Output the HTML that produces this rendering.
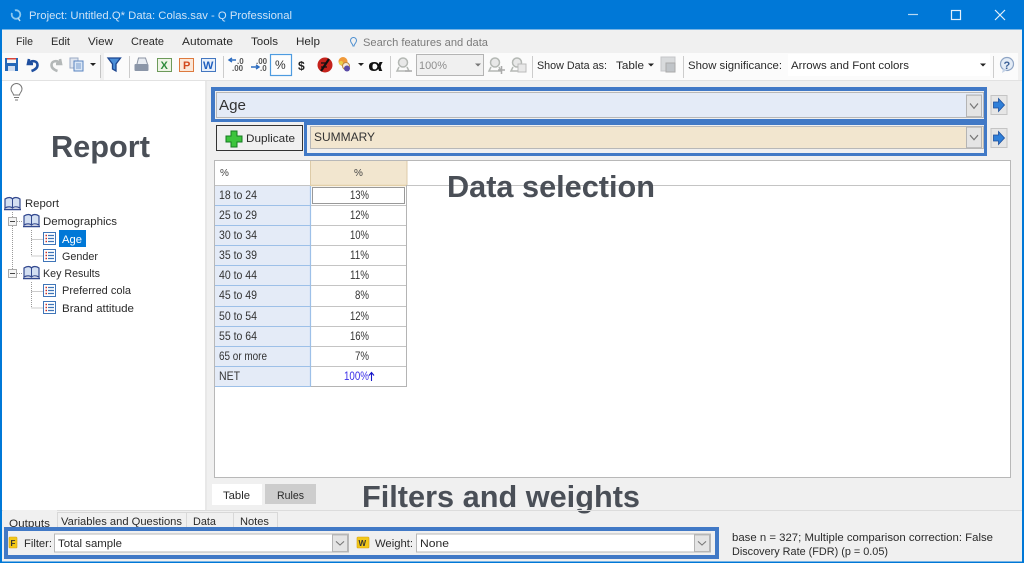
<!DOCTYPE html>
<html><head><meta charset="utf-8"><title>Q Professional</title>
<style>
html,body{margin:0;padding:0;background:#f0f0f0;width:1024px;height:563px;overflow:hidden}
svg{display:block;font-family:"Liberation Sans",sans-serif}
text{font-size:11px;fill:#2a2a2a}
.h{font-size:30.5px;font-weight:bold;fill:#4a4f57}
.v{font-size:12px;fill:#333}
.l{font-size:11.5px;fill:#333}
</style></head><body>
<svg width="1024" height="563" viewBox="0 0 1024 563" xmlns="http://www.w3.org/2000/svg">
<defs>
<g id="arrowbtn"><rect x="0.5" y="0.5" width="16" height="19" fill="#e6e6e6" stroke="#c4c4c4"/><path d="M3 7h5V3.500l6 6.500-6 6.500V13H3z" fill="#2f7fd8" stroke="#1c4f9c" stroke-width=".8"/></g>
<g id="dd"><rect x="0.5" y="0.5" width="15" height="18" fill="#e4e4e4" stroke="#b4b4b4"/><path d="M4 7.500l4 4 4-4" fill="none" stroke="#777" stroke-width="1.100"/></g>
<g id="book"><path d="M1 3c3-2 6-2 7.500 0 1.500-2 5-2 7.500 0v9c-3-1.500-6-1.500-7.500 0-1.500-1.500-5-1.500-7.500 0z" fill="#d3dff2" stroke="#33498f" stroke-width="1.200"/><path d="M8.500 3v9" stroke="#33498f"/><path d="M0 13.500h17" stroke="#33498f" stroke-width="1.400"/></g>
<g id="doc"><rect x="0.500" y="0.500" width="12" height="12" fill="#fff" stroke="#3f75b8"/><path d="M2.500 3.500h1.500M2.500 6.500h1.500M2.500 9.500h1.500" stroke="#c8322a" stroke-width="1.400"/><path d="M5 3.500h6M5 6.500h6M5 9.500h6" stroke="#3f75b8" stroke-width="1.200"/></g>
<g id="minus"><rect x="0.500" y="0.500" width="8" height="8" fill="#f4f4f4" stroke="#aaa"/><path d="M2 4.500h5" stroke="#444"/></g>
<g id="mag"><circle cx="7" cy="5.500" r="4.500" fill="#e8e8e8" stroke="#b4b8b4" stroke-width="1.500"/><path d="M3 10l-2 4h12l-2-4" fill="none" stroke="#b4b8b4" stroke-width="1.500"/></g>
</defs>

<rect width="1024" height="563" fill="#0078d7"/>
<rect x="2" y="29.500" width="1020" height="532" fill="#f0f0f0"/>

<circle cx="16" cy="14.500" r="4.300" fill="none" stroke="#8cc8ee" stroke-width="1.800" stroke-dasharray="15 4"/>
<path d="M18 18l2 3" stroke="#bfe0f5" stroke-width="1.500"/>
<text x="29" y="19" style="fill:#cfe3f6" textLength="263" lengthAdjust="spacingAndGlyphs">Project: Untitled.Q*  Data: Colas.sav - Q Professional</text>
<path d="M908 14.500h10" stroke="#b8d8f2" stroke-width="1.200"/>
<rect x="951.500" y="10.500" width="9" height="9" fill="none" stroke="#e4f0fa" stroke-width="1.200"/>
<path d="M995 10l10 10M1005 10l-10 10" stroke="#e4f0fa" stroke-width="1.200"/>

<text x="16" y="45" textLength="17" lengthAdjust="spacingAndGlyphs">File</text>
<text x="51" y="45" textLength="19" lengthAdjust="spacingAndGlyphs">Edit</text>
<text x="88" y="45" textLength="25" lengthAdjust="spacingAndGlyphs">View</text>
<text x="131" y="45" textLength="33" lengthAdjust="spacingAndGlyphs">Create</text>
<text x="182" y="45" textLength="51" lengthAdjust="spacingAndGlyphs">Automate</text>
<text x="251" y="45" textLength="27" lengthAdjust="spacingAndGlyphs">Tools</text>
<text x="296" y="45" textLength="24" lengthAdjust="spacingAndGlyphs">Help</text>
<path d="M353 46c0-2-2.500-3-2.500-5.500a3 3 0 0 1 6 0c0 2.500-2.500 3.500-2.500 5.500z" fill="none" stroke="#4d8fd0" stroke-width="1"/>
<text x="363" y="46" style="fill:#7b7b7b" textLength="125" lengthAdjust="spacingAndGlyphs">Search features and data</text>

<rect x="2" y="53" width="98" height="27" fill="#fafafa"/>
<rect x="104" y="53" width="914" height="27" fill="#fbfbfb"/>
<rect x="2" y="80" width="1020" height="1" fill="#e2e2e2"/>
<rect x="5" y="58" width="13" height="13" fill="#2467b8"/><rect x="7" y="58" width="9" height="5" fill="#f4f4f4"/><rect x="7" y="58" width="9" height="1.500" fill="#d8443a"/><rect x="8" y="66" width="7" height="5" fill="#cfdcef"/>
<path d="M29 59l-1 5 5 0M28.500 63.500c3-3.500 9-3 9 1.500 0 3-3 5-6 6" fill="none" stroke="#1f4f9f" stroke-width="2.600"/>
<path d="M60 59l1 5-5 0M60.500 63.500c-3-3.500-9-3-9 1.500 0 3 3 5 6 6" fill="none" stroke="#b4b8b8" stroke-width="2.600"/>
<rect x="70" y="58" width="8" height="10" fill="#e0e6f0" stroke="#9aaac4"/><rect x="74" y="61" width="9" height="10" fill="#dbe7f6" stroke="#5a84c0"/><path d="M76 64h5M76 66h5M76 68h5" stroke="#5a84c0" stroke-width=".8"/>
<path d="M90 63h6l-3 3z" fill="#222"/>
<path d="M100.500 55v23" stroke="#c4c4c4"/>
<path d="M108 58h12.500l-4.500 6v7l-3.500-2v-5z" fill="#4a8ed8" stroke="#1d4690" stroke-width="1.300"/>
<path d="M129.500 56v22" stroke="#ccc"/>
<path d="M137 64l1.500-6h7l2 6" fill="#e8ecf2" stroke="#8b93a3"/><rect x="134.500" y="64" width="14" height="7" rx="1" fill="#8b96a8"/>
<rect x="157.500" y="58.500" width="14" height="13" fill="#eef4e6" stroke="#6d9a5a"/><text x="160.500" y="69" style="font-size:11px;font-weight:bold;fill:#2d8a3a">X</text>
<rect x="179.500" y="58.500" width="14" height="13" fill="#fbe7d8" stroke="#dd7a3e"/><text x="183" y="69" style="font-size:11px;font-weight:bold;fill:#d2481c">P</text>
<rect x="201.500" y="58.500" width="14" height="13" fill="#e7effa" stroke="#4477c0"/><text x="203" y="69" style="font-size:11px;font-weight:bold;fill:#1f5fbf">W</text>
<path d="M223.500 56v22" stroke="#ccc"/>
<path d="M236 60h-6M232 58l-3 2 3 2" fill="none" stroke="#2c6cc0" stroke-width="1.400"/><text x="237" y="64" style="font-size:8px;font-weight:bold;fill:#555">.0</text><text x="232" y="71" style="font-size:8px;font-weight:bold;fill:#555">.00</text>
<path d="M251 67h7M256 65l3 2-3 2" fill="none" stroke="#2c6cc0" stroke-width="1.400"/><text x="256" y="64" style="font-size:8px;font-weight:bold;fill:#555">.00</text><text x="260" y="71" style="font-size:8px;font-weight:bold;fill:#555">.0</text>
<rect x="270.500" y="54.500" width="21" height="21" fill="#fdfdfd" stroke="#4d9be0" stroke-width="1.200"/>
<text x="275" y="69" style="font-size:12px;fill:#333">%</text>
<text x="298" y="70" style="font-size:12px;font-weight:bold;fill:#222">$</text>
<circle cx="325" cy="65" r="7.500" fill="#c5221c"/><path d="M329 59l-8 12" stroke="#111" stroke-width="2.200"/><path d="M321 63h6M321 67h6" stroke="#111" stroke-width="1.300"/>
<circle cx="343" cy="61.500" r="4.500" fill="#f09a3a"/><circle cx="341" cy="63" r="2" fill="#e9d04a"/><circle cx="346" cy="66" r="3.500" fill="#f4ead8" stroke="#bb8844"/><circle cx="347" cy="68.500" r="3" fill="#5a4ba8"/>
<path d="M358 63h6l-3 3z" fill="#222"/>
<text x="368" y="71" style="font-size:17px;fill:#111;font-weight:bold" textLength="15" lengthAdjust="spacingAndGlyphs">α</text>
<path d="M390.500 56v22" stroke="#ccc"/>
<use href="#mag" x="396" y="57"/><path d="M405 71h7" stroke="#aaa" stroke-width="1.500"/>
<rect x="416.500" y="54.500" width="67" height="21" fill="#f0f0f0" stroke="#b4b4b4"/>
<text x="419" y="69" style="fill:#8e8e8e" textLength="28" lengthAdjust="spacingAndGlyphs">100%</text>
<path d="M475 63.500h6l-3 3z" fill="#777"/>
<use href="#mag" x="488" y="57"/><path d="M498 70h7M501.500 66v8" stroke="#aaa" stroke-width="1.500"/>
<use href="#mag" x="510" y="57"/><rect x="518" y="64" width="8" height="8" fill="#e8e8e8" stroke="#bbb"/>
<path d="M532.500 56v22" stroke="#ccc"/>
<text x="537" y="69" textLength="70" lengthAdjust="spacingAndGlyphs">Show Data as:</text>
<text x="616" y="69" textLength="28" lengthAdjust="spacingAndGlyphs">Table</text>
<path d="M648 63.500h6l-3 3z" fill="#222"/>
<rect x="661" y="57" width="14" height="14" fill="#d8dadc" stroke="#c4c6c8"/><rect x="666" y="63" width="9" height="9" fill="#c0c4c8" stroke="#aaa"/>
<path d="M683.500 56v22" stroke="#ccc"/>
<text x="688" y="69" textLength="94" lengthAdjust="spacingAndGlyphs">Show significance:</text>
<rect x="788" y="54" width="202" height="22" fill="#fff"/>
<text x="791" y="69" textLength="118" lengthAdjust="spacingAndGlyphs">Arrows and Font colors</text>
<path d="M980 63.500h6l-3 3z" fill="#222"/>
<path d="M993.500 56v22" stroke="#ccc"/>
<circle cx="1007" cy="64" r="6.500" fill="#e4ecf6" stroke="#8ea4c4" stroke-width="1.200"/><text x="1003.500" y="69" style="font-size:11px;font-weight:bold;fill:#3b5f96">?</text>
<path d="M1003 69l-1 4 5-3" fill="#c4d2e6"/>

<rect x="2" y="81" width="203" height="430" fill="#fff"/>
<path d="M13.500 95c0-2-2.500-3-2.500-6a5.500 5.500 0 0 1 11 0c0 3-2.500 4-2.500 6zM14 97.500h5M15 100h3" fill="none" stroke="#777" stroke-width="1"/>
<text class="h" x="51" y="157" textLength="99" lengthAdjust="spacingAndGlyphs">Report</text>

<g stroke="#9a9a9a" stroke-dasharray="1 1" fill="none">
<path d="M12.500 212v64M17 221.500h6M17 273.500h6M31.500 230v26h12M31.500 239.500h12M31.500 282v26h12M31.500 291.500h12"/>
</g>
<use href="#book" x="4" y="196"/>
<use href="#minus" x="8" y="217"/><use href="#book" x="23" y="213"/>
<use href="#minus" x="8" y="269"/><use href="#book" x="23" y="265"/>
<use href="#doc" x="43" y="232"/><use href="#doc" x="43" y="249"/><use href="#doc" x="43" y="284"/><use href="#doc" x="43" y="301"/>
<text x="25" y="207" textLength="34" lengthAdjust="spacingAndGlyphs">Report</text>
<text x="43" y="225" textLength="74" lengthAdjust="spacingAndGlyphs">Demographics</text>
<rect x="59" y="230" width="27" height="17" fill="#0078d7"/>
<text x="62" y="243" style="fill:#fff" textLength="20" lengthAdjust="spacingAndGlyphs">Age</text>
<text x="62" y="260" textLength="36" lengthAdjust="spacingAndGlyphs">Gender</text>
<text x="43" y="277" textLength="57" lengthAdjust="spacingAndGlyphs">Key Results</text>
<text x="62" y="294" textLength="69" lengthAdjust="spacingAndGlyphs">Preferred cola</text>
<text x="62" y="312" textLength="72" lengthAdjust="spacingAndGlyphs">Brand attitude</text>

<rect x="205" y="81" width="2" height="430" fill="#e8e8e8"/>

<path d="M211 87h776v69H304v-34H211z" fill="#4179c6"/>
<rect x="215" y="91" width="769" height="28" fill="#f0f0f0"/>
<rect x="216.500" y="92.500" width="767" height="25" fill="#e4ebf7" stroke="#b8b8b8"/>
<use href="#dd" transform="translate(966 94.500) scale(1 1.200)"/>
<text x="219" y="110" style="font-size:15px;fill:#333" textLength="27" lengthAdjust="spacingAndGlyphs">Age</text>
<rect x="307" y="125" width="677" height="28" fill="#f0f0f0"/>
<rect x="310.500" y="126.500" width="673" height="22" fill="#f2e6cf" stroke="#b8b8b8"/>
<use href="#dd" transform="translate(966 126.500) scale(1 1.150)"/>
<text x="314" y="141" style="font-size:12px;fill:#333" textLength="61" lengthAdjust="spacingAndGlyphs">SUMMARY</text>
<use href="#arrowbtn" x="990.500" y="95"/>
<use href="#arrowbtn" x="990.500" y="128"/>

<rect x="216.500" y="125.500" width="86" height="25" fill="#f0f0f0" stroke="#333" stroke-width="1"/>
<path d="M231 131h6v5h5v6h-5v5h-6v-5h-5v-6h5z" fill="#3cc43c" stroke="#157a20" stroke-width="1"/>
<text x="246" y="142" textLength="49" lengthAdjust="spacingAndGlyphs">Duplicate</text>

<rect x="214.500" y="160.500" width="796" height="317" fill="#fff" stroke="#b8b8b8"/>
<path d="M215 185.500h795" stroke="#c4c4c4"/>
<rect x="310" y="161" width="97" height="24" fill="#f2e6cf"/>
<path d="M310.500 161v24M407 161v24" stroke="#ddcba8"/>
<path d="M310 185.500h97" stroke="#e2cfa8" stroke-width="1.500"/>
<text x="220" y="176" style="font-size:10px;fill:#444">%</text>
<text x="354" y="176" style="font-size:10px;fill:#444">%</text>

<rect x="215" y="186" width="95" height="201" fill="#e4ebf7"/>
<g stroke="#9dc0e8" fill="none"><path d="M215 205.500h95M215 225.500h95M215 245.500h95M215 265.500h95M215 285.500h95M215 306.500h95M215 326.500h95M215 346.500h95M215 366.500h95M215 386.500h95"/><path d="M310.500 186v201" stroke-width="1.200"/></g>
<g stroke="#c4c4c4" fill="none"><path d="M311 205.500h95M311 225.500h95M311 245.500h95M311 265.500h95M311 285.500h95M311 306.500h95M311 326.500h95M311 346.500h95M311 366.500h95"/></g>
<path d="M311 386.500h96M406.500 185v202" stroke="#b4b4b4"/>
<rect x="312.500" y="187.500" width="92" height="16" fill="#fff" stroke="#333" stroke-dasharray="1 1"/>
<text class="l" x="219" y="199" textLength="38" lengthAdjust="spacingAndGlyphs">18 to 24</text>
<text class="l" x="219" y="219" textLength="38" lengthAdjust="spacingAndGlyphs">25 to 29</text>
<text class="l" x="219" y="239" textLength="38" lengthAdjust="spacingAndGlyphs">30 to 34</text>
<text class="l" x="219" y="259" textLength="38" lengthAdjust="spacingAndGlyphs">35 to 39</text>
<text class="l" x="219" y="279" textLength="38" lengthAdjust="spacingAndGlyphs">40 to 44</text>
<text class="l" x="219" y="299" textLength="38" lengthAdjust="spacingAndGlyphs">45 to 49</text>
<text class="l" x="219" y="320" textLength="38" lengthAdjust="spacingAndGlyphs">50 to 54</text>
<text class="l" x="219" y="340" textLength="38" lengthAdjust="spacingAndGlyphs">55 to 64</text>
<text class="l" x="219" y="360" textLength="48" lengthAdjust="spacingAndGlyphs">65 or more</text>
<text class="l" x="219" y="380" textLength="21" lengthAdjust="spacingAndGlyphs">NET</text>
<text class="v" x="350" y="199" textLength="19" lengthAdjust="spacingAndGlyphs">13%</text>
<text class="v" x="350" y="219" textLength="19" lengthAdjust="spacingAndGlyphs">12%</text>
<text class="v" x="350" y="239" textLength="19" lengthAdjust="spacingAndGlyphs">10%</text>
<text class="v" x="350" y="259" textLength="19" lengthAdjust="spacingAndGlyphs">11%</text>
<text class="v" x="350" y="279" textLength="19" lengthAdjust="spacingAndGlyphs">11%</text>
<text class="v" x="355" y="299" textLength="14" lengthAdjust="spacingAndGlyphs">8%</text>
<text class="v" x="350" y="320" textLength="19" lengthAdjust="spacingAndGlyphs">12%</text>
<text class="v" x="350" y="340" textLength="19" lengthAdjust="spacingAndGlyphs">16%</text>
<text class="v" x="355" y="360" textLength="14" lengthAdjust="spacingAndGlyphs">7%</text>
<text class="v" x="344" y="380" style="fill:#3a2ee8" textLength="25" lengthAdjust="spacingAndGlyphs">100%</text>
<path d="M371.500 381v-8M369 375.500l2.500-3 2.500 3" fill="none" stroke="#1414c8" stroke-width="1.100"/>

<text class="h" x="447" y="197" textLength="208" lengthAdjust="spacingAndGlyphs">Data selection</text>

<rect x="212" y="484" width="50" height="21" fill="#fff"/>
<rect x="265" y="484" width="51" height="20" fill="#cdcdcd"/>
<text x="223" y="499" textLength="27" lengthAdjust="spacingAndGlyphs">Table</text>
<text x="277" y="499" textLength="27" lengthAdjust="spacingAndGlyphs">Rules</text>
<text class="h" x="362" y="507" textLength="278" lengthAdjust="spacingAndGlyphs">Filters and weights</text>

<path d="M2 510.500h1020" stroke="#dcdcdc"/>
<rect x="3" y="510" width="54" height="20" fill="#f0f0f0"/>
<path d="M57.500 528V512.500H186.500V528M186.500 512.500H233.500V528M233.500 512.500H277.500V528" fill="none" stroke="#d8d8d8"/>
<text x="9" y="527" textLength="41" lengthAdjust="spacingAndGlyphs">Outputs</text>
<text x="61" y="525" textLength="121" lengthAdjust="spacingAndGlyphs">Variables and Questions</text>
<text x="193" y="525" textLength="23" lengthAdjust="spacingAndGlyphs">Data</text>
<text x="240" y="525" textLength="29" lengthAdjust="spacingAndGlyphs">Notes</text>

<rect x="4" y="527" width="715" height="32" fill="#4179c6"/>
<rect x="8" y="531" width="707" height="24" fill="#f0f0f0"/>
<rect x="9" y="537" width="8" height="11" rx="1" fill="#f2c818" stroke="#d8a010" stroke-width=".6"/><text x="10.500" y="546" style="font-size:8px;font-weight:bold;fill:#333">F</text>
<text x="24" y="547" textLength="28" lengthAdjust="spacingAndGlyphs">Filter:</text>
<rect x="54.500" y="534" width="294" height="18" fill="#fff" stroke="#b8b8b8"/>
<use href="#dd" transform="translate(332 534.500) scale(1 .92)"/>
<text x="58" y="547" textLength="64" lengthAdjust="spacingAndGlyphs">Total sample</text>
<rect x="357" y="537" width="12" height="11" rx="1" fill="#f2c818" stroke="#d8a010" stroke-width=".6"/><text x="358.500" y="546" style="font-size:8px;font-weight:bold;fill:#333">W</text>
<text x="375" y="547" textLength="38" lengthAdjust="spacingAndGlyphs">Weight:</text>
<rect x="416.500" y="534" width="294" height="18" fill="#fff" stroke="#b8b8b8"/>
<use href="#dd" transform="translate(694 534.500) scale(1 .92)"/>
<text x="420" y="547" textLength="29" lengthAdjust="spacingAndGlyphs">None</text>
<text x="732" y="541" textLength="261" lengthAdjust="spacingAndGlyphs">base n = 327; Multiple comparison correction: False</text>
<text x="732" y="555" textLength="156" lengthAdjust="spacingAndGlyphs">Discovery Rate (FDR) (p = 0.05)</text>
</svg>
</body></html>
